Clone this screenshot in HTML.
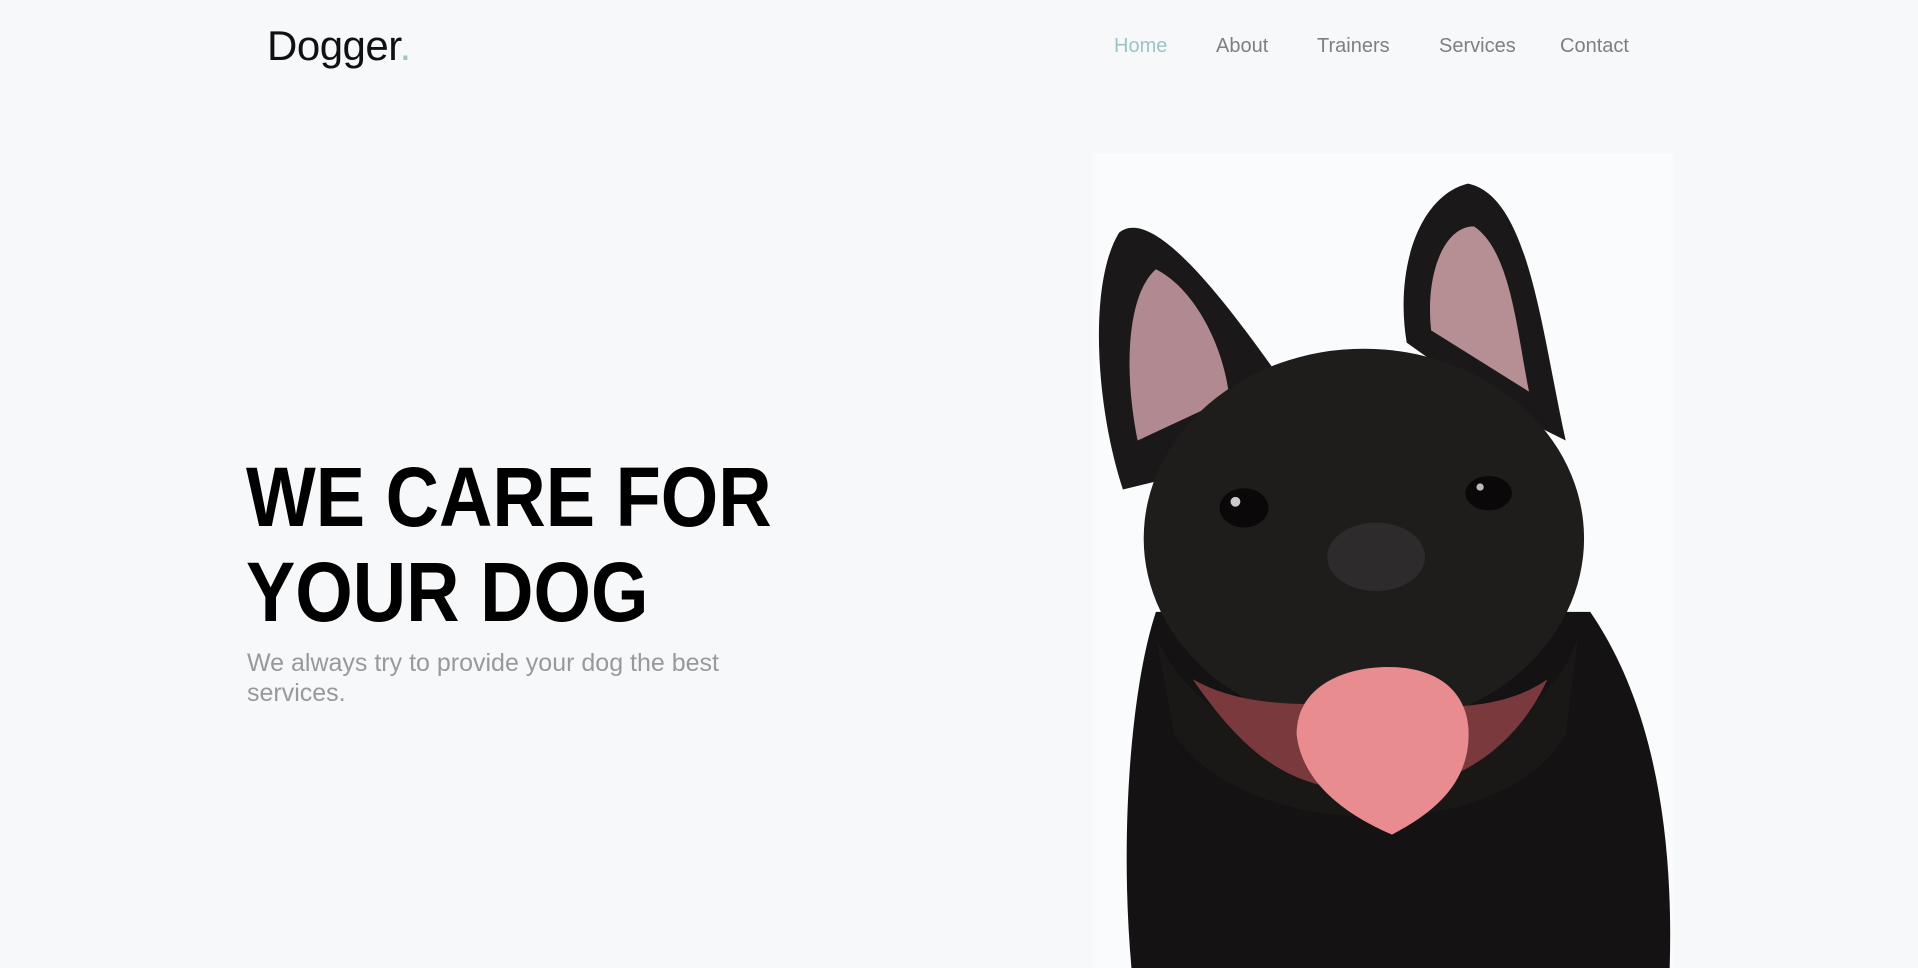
<!DOCTYPE html>
<html><head><meta charset="utf-8"><style>
html,body{margin:0;padding:0;width:1918px;height:968px;overflow:hidden;background:#f7f8fa;font-family:"Liberation Sans",sans-serif}
svg.bg{position:absolute;left:0;top:0;width:1918px;height:968px}
.logo{position:absolute;left:267px;top:22px;font-size:42px;color:#111;letter-spacing:-0.5px}
.logo span{color:#9cc3c6}
.nav{position:absolute;top:35px;font-size:20px;color:#7f7f7f}
h1{position:absolute;left:246px;top:450px;margin:0;font-size:84px;line-height:95px;font-weight:bold;color:#000;transform:scaleX(0.88);transform-origin:left top;white-space:nowrap}
p{position:absolute;left:247px;top:648px;margin:0;width:560px;font-size:25px;line-height:30px;color:#999}
</style></head><body>
<svg class="bg" viewBox="0 0 1568 791" preserveAspectRatio="none">
<rect x="893" y="125" width="475" height="666" fill="#fafbfc"/>
<!-- ears -->
<path d="M918,400 C895,330 890,230 915,190 C940,170 990,230 1040,300 L1000,380 Z" fill="#1b1819"/>
<path d="M930,360 C918,300 922,240 945,220 C975,235 1000,280 1005,325 Z" fill="#b08a90"/>
<path d="M1150,280 C1140,220 1160,160 1200,150 C1250,160 1260,270 1280,360 L1220,330 Z" fill="#1b1819"/>
<path d="M1170,270 C1165,225 1180,185 1205,185 C1235,205 1240,270 1250,320 Z" fill="#b68f94"/>
<!-- body -->
<path d="M945,500 C925,560 915,680 925,791 L1365,791 C1368,690 1355,580 1300,500 Z" fill="#141212"/>
<!-- head -->
<ellipse cx="1115" cy="440" rx="180" ry="155" fill="#1f1c1c"/>
<path d="M945,520 C1000,650 1250,650 1290,520 L1280,600 C1230,690 1020,690 960,600 Z" fill="#1a1717"/>
<!-- mouth -->
<path d="M975,555 C1020,620 1060,650 1130,645 C1200,645 1245,600 1265,555 C1230,580 1180,580 1130,575 C1070,575 1020,580 975,555 Z" fill="#7a3a3d"/>
<path d="M1060,600 C1060,560 1100,545 1135,545 C1180,545 1205,570 1200,610 C1195,650 1160,670 1138,682 C1110,670 1065,645 1060,600 Z" fill="#e88c90"/>
<!-- eyes -->
<ellipse cx="1017" cy="415" rx="20" ry="16" fill="#0a0808"/>
<circle cx="1010" cy="410" r="4" fill="#ccc"/>
<ellipse cx="1217" cy="403" rx="19" ry="14" fill="#0a0808"/>
<circle cx="1210" cy="398" r="3" fill="#bbb"/>
<!-- nose -->
<ellipse cx="1125" cy="455" rx="40" ry="28" fill="#2e2b2c"/>
</svg>
<div class="logo">Dogger<span>.</span></div>
<div class="nav" style="left:1114px;color:#9cc3c6">Home</div>
<div class="nav" style="left:1216px">About</div>
<div class="nav" style="left:1317px">Trainers</div>
<div class="nav" style="left:1439px">Services</div>
<div class="nav" style="left:1560px">Contact</div>
<h1>WE CARE FOR<br>YOUR DOG</h1>
<p>We always try to provide your dog the best services.</p>
</body></html>
